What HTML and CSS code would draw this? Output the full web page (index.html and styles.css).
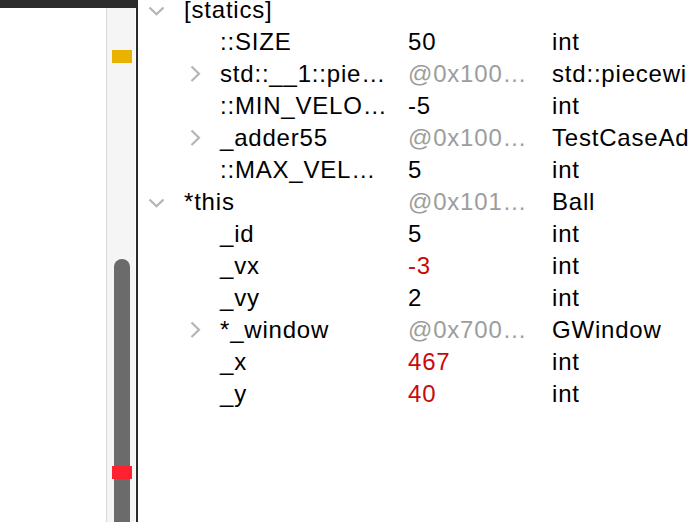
FILE: index.html
```html
<!DOCTYPE html>
<html>
<head>
<meta charset="utf-8">
<link rel="stylesheet" href="styles.css">
</head>
<body>
<div class="app">
  <aside class="side">
    <div class="side-top"></div>
    <div class="side-body">
      <div class="pane"></div>
      <div class="track">
        <div class="mark mark-warn"></div>
        <div class="thumb"></div>
        <div class="mark mark-err"></div>
      </div>
    </div>
  </aside>
  <main class="vars">
    <div class="tree">
      <div class="row d0"><span class="tw"><svg class="down" width="18" height="10" viewBox="0 0 18 10"><path d="M1.5 1.5 L8.5 8.3 L15.5 1.5"/></svg></span><span class="name">[statics]</span><span class="val"></span><span class="type"></span></div>
      <div class="row d1"><span class="tw"></span><span class="name">::SIZE</span><span class="val">50</span><span class="type">int</span></div>
      <div class="row d1"><span class="tw"><svg class="right" width="12" height="18" viewBox="0 0 12 18"><path d="M1.5 1.5 L9 8.8 L1.5 16"/></svg></span><span class="name">std::__1::pie…</span><span class="val addr">@0x100…</span><span class="type">std::piecewi</span></div>
      <div class="row d1"><span class="tw"></span><span class="name">::MIN_VELO…</span><span class="val">-5</span><span class="type">int</span></div>
      <div class="row d1"><span class="tw"><svg class="right" width="12" height="18" viewBox="0 0 12 18"><path d="M1.5 1.5 L9 8.8 L1.5 16"/></svg></span><span class="name">_adder55</span><span class="val addr">@0x100…</span><span class="type">TestCaseAd</span></div>
      <div class="row d1"><span class="tw"></span><span class="name">::MAX_VEL…</span><span class="val">5</span><span class="type">int</span></div>
      <div class="row d0"><span class="tw"><svg class="down" width="18" height="10" viewBox="0 0 18 10"><path d="M1.5 1.5 L8.5 8.3 L15.5 1.5"/></svg></span><span class="name">*this</span><span class="val addr">@0x101…</span><span class="type">Ball</span></div>
      <div class="row d1"><span class="tw"></span><span class="name">_id</span><span class="val">5</span><span class="type">int</span></div>
      <div class="row d1"><span class="tw"></span><span class="name">_vx</span><span class="val changed">-3</span><span class="type">int</span></div>
      <div class="row d1"><span class="tw"></span><span class="name">_vy</span><span class="val">2</span><span class="type">int</span></div>
      <div class="row d1"><span class="tw"><svg class="right" width="12" height="18" viewBox="0 0 12 18"><path d="M1.5 1.5 L9 8.8 L1.5 16"/></svg></span><span class="name">*_window</span><span class="val addr">@0x700…</span><span class="type">GWindow</span></div>
      <div class="row d1"><span class="tw"></span><span class="name">_x</span><span class="val changed">467</span><span class="type">int</span></div>
      <div class="row d1"><span class="tw"></span><span class="name">_y</span><span class="val changed">40</span><span class="type">int</span></div>
    </div>
  </main>
</div>
</body>
</html>
```
FILE: styles.css
```css
html, body {
  margin: 0;
  padding: 0;
  background: #ffffff;
}
body {
  width: 694px;
  height: 522px;
  overflow: hidden;
  font-family: "Liberation Sans", Arial, sans-serif;
}
.app {
  display: flex;
  height: 522px;
}
.side {
  width: 136px;
  flex: none;
  display: flex;
  flex-direction: column;
  border-right: 2px solid #2b2b2b;
}
.side-top {
  height: 8px;
  background: #2c2c2c;
  flex: none;
}
.side-body {
  flex: 1;
  display: flex;
}
.pane {
  width: 106px;
  background: #ffffff;
}
.track {
  position: relative;
  flex: 1;
  background: #f5f5f5;
  border-left: 1px solid #dadada;
  border-right: 1px solid #fbfbfb;
}
.thumb {
  position: absolute;
  left: 7px;
  width: 16px;
  top: 251px;
  bottom: 0;
  background: #6b6b6b;
  border-radius: 8px 8px 0 0;
}
.mark {
  position: absolute;
  left: 5px;
  width: 20px;
  height: 13px;
  z-index: 1;
}
.mark-warn {
  top: 42px;
  background: #e9b200;
}
.mark-err {
  top: 458px;
  background: #ff212f;
}
.vars {
  flex: 1;
  overflow: hidden;
}
.tree {
  margin-top: -6px;
}
.row {
  display: flex;
  align-items: center;
  height: 32px;
  font-size: 24px;
  line-height: 32px;
  letter-spacing: 0.8px;
  color: #000000;
  white-space: nowrap;
}
.row.d0 { padding-left: 10px; }
.row.d1 { padding-left: 46px; }
.tw {
  width: 36px;
  flex: none;
  display: flex;
  align-items: center;
}
.row.d1 .tw { padding-left: 6px; width: 30px; }
.tw svg path {
  fill: none;
  stroke: #b4b4b4;
  stroke-width: 2.2;
  stroke-linecap: butt;
  stroke-linejoin: miter;
}
.down { margin-top: 2px; }
.name {
  flex: none;
}
.row.d0 .name { width: 224px; }
.row.d1 .name { width: 188px; }
.val {
  width: 144px;
  flex: none;
}
.val.addr { color: #9d9d9d; }
.val.changed { color: #c70b0b; }
.type {
  flex: none;
}
```
